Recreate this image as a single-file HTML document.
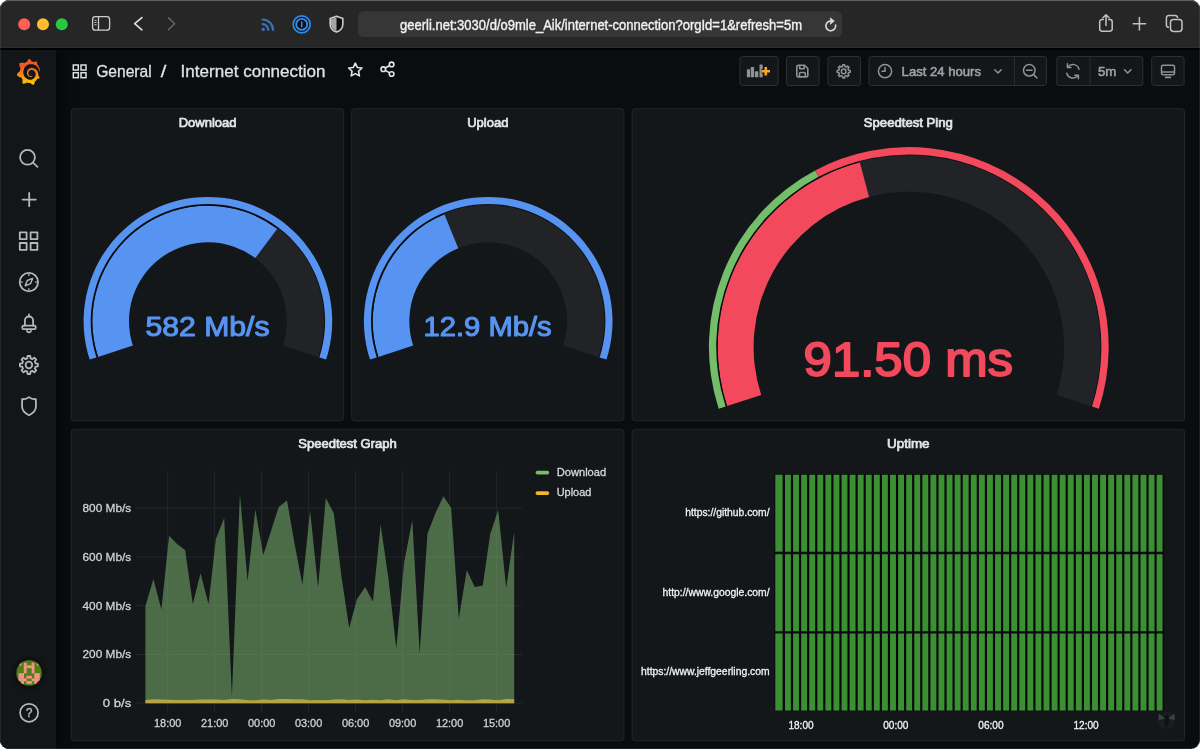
<!DOCTYPE html>
<html lang="en"><head><meta charset="utf-8"><title>Internet connection - Grafana</title>
<style>
html,body{margin:0;padding:0;background:#fff;}
body{width:1200px;height:749px;overflow:hidden;position:relative;font-family:"Liberation Sans",Arial,sans-serif;}
.win{position:absolute;left:0;top:0;width:1200px;height:749px;border-radius:9px;overflow:hidden;background:#0b0c0e;}
.titlebar{position:absolute;left:0;top:0;width:1200px;height:48px;background:#262626;box-shadow:inset 0 -1px 0 #2d2d2f;border-bottom:2px solid #000;z-index:2;}
.sidebar{position:absolute;left:0;top:50px;width:56px;height:699px;background:#131618;box-shadow:0 0 20px #000;}
.navbar{position:absolute;left:56px;top:49px;width:1144px;height:47px;}
svg.ov{z-index:3;position:absolute;left:0;top:0;width:1200px;height:749px;}
svg text{font-family:"Liberation Sans",Arial,sans-serif;}
svg.ov{will-change:transform;}
.edge{z-index:4;position:absolute;left:0;top:0;width:1200px;height:749px;border-radius:9px;box-sizing:border-box;box-shadow:inset 0 1px 0 rgba(255,255,255,.2), inset 0 0 0 1px rgba(255,255,255,.08);pointer-events:none;}
</style></head>
<body>
<div class="win">
  <div class="titlebar"></div>
  <div class="sidebar"></div>
  <div class="navbar"></div>
  <svg class="ov" viewBox="0 0 1200 749">
<rect x="71.3" y="108.7" width="272.4" height="312.1" rx="3" fill="#131719" stroke="#23262b"/>
<rect x="351.7" y="108.7" width="272.2" height="312.1" rx="3" fill="#131719" stroke="#23262b"/>
<rect x="632.2" y="108.7" width="552.3" height="312.1" rx="3" fill="#131719" stroke="#23262b"/>
<rect x="71.3" y="429.3" width="552.6" height="311.4" rx="3" fill="#131719" stroke="#23262b"/>
<rect x="632.2" y="429.3" width="552.3" height="311.4" rx="3" fill="#131719" stroke="#23262b"/>
<rect x="739.9" y="56.5" width="38.2" height="29" rx="2.5" fill="#131719" stroke="#2b2f34"/>
<rect x="786.5" y="56.5" width="32.6" height="29" rx="2.5" fill="#131719" stroke="#2b2f34"/>
<rect x="827.9" y="56.5" width="32.6" height="29" rx="2.5" fill="#131719" stroke="#2b2f34"/>
<rect x="869" y="56.5" width="177.5" height="29" rx="2.5" fill="#131719" stroke="#2b2f34"/>
<rect x="1056.8" y="56.5" width="86" height="29" rx="2.5" fill="#131719" stroke="#2b2f34"/>
<rect x="1151.7" y="56.5" width="32.4" height="29" rx="2.5" fill="#131719" stroke="#2b2f34"/>
<path d="M1014.4 56.5V85.5M1090 56.5V85.5" stroke="#2b2f34"/>
<!-- Safari toolbar -->
<circle cx="24.2" cy="24.2" r="6" fill="#fe5f57"/><circle cx="43" cy="24.2" r="6" fill="#febc2e"/><circle cx="61.8" cy="24.2" r="6" fill="#28c840"/>
<g fill="none" stroke="#cdcdcd" stroke-width="1.3"><rect x="92.6" y="16.6" width="17" height="13.6" rx="2.8"/><path d="M98.5 16.6V30.2"/><path d="M94.4 20.3h2.2M94.4 22.5h2.2M94.4 24.7h2.2" stroke-width=".9"/></g>
<path d="M141.9 17.6L134.7 23.7L141.9 29.8" fill="none" stroke="#dcdcdc" stroke-width="1.7" stroke-linecap="round" stroke-linejoin="round"/>
<path d="M168.5 17.9L174.6 23.8L168.5 29.7" fill="none" stroke="#66666a" stroke-width="1.5" stroke-linecap="round" stroke-linejoin="round"/>
<g fill="none" stroke="#3d6fb4" stroke-width="2.2" stroke-linecap="round"><path d="M262.5 19.5A10.5 10.5 0 0 1 273 30"/><path d="M262.5 24.2A5.8 5.8 0 0 1 268.3 30"/></g><circle cx="263.2" cy="29.4" r="1.7" fill="#3d6fb4"/>
<circle cx="301.7" cy="24.4" r="8.5" fill="#141416" stroke="#2f8bea" stroke-width="1.7"/><circle cx="301.7" cy="24.4" r="5.5" fill="#101012" stroke="#2f8bea" stroke-width="1.9"/><rect x="300.9" y="21.2" width="1.6" height="6.4" rx=".8" fill="#2f8bea"/>
<path d="M336.5 16.3l6.3 2.3v5.6c0 3.8-2.6 6.5-6.3 7.9c-3.7-1.4-6.3-4.1-6.3-7.9v-5.6z" fill="#0e0e0f" stroke="#cdcdcd" stroke-width="1.6" stroke-linejoin="round"/><path d="M336.5 17.2v14c-3.3-1.3-5.5-3.7-5.5-7v-5z" fill="#a2a5a8"/>
<rect x="358" y="11.2" width="484.1" height="25.9" rx="5.5" fill="#363636"/>
<text x="400" y="29.6" font-size="13.8" fill="#f0f0f0" stroke="#f0f0f0" stroke-width="0.4" textLength="402" lengthAdjust="spacingAndGlyphs">geerli.net:3030/d/o9mle_Aik/internet-connection?orgId=1&amp;refresh=5m</text>
<path d="M835.6 25.1A4.9 4.9 0 1 1 830.4 21" fill="none" stroke="#dcdcdc" stroke-width="1.6" stroke-linecap="round"/><path d="M830.3 17.7l4.1 3.4l-4.1 3.3z" fill="#dcdcdc" stroke="#dcdcdc" stroke-width=".5" stroke-linejoin="round"/>
<g fill="none" stroke="#c3c3c6" stroke-width="1.5" stroke-linecap="round" stroke-linejoin="round"><path d="M1103.3 19.5h-1.3a2.3 2.3 0 0 0-2.3 2.3v7.1a2.3 2.3 0 0 0 2.3 2.3h7.9a2.3 2.3 0 0 0 2.3-2.3v-7.1a2.3 2.3 0 0 0-2.3-2.3h-1.3"/><path d="M1106 25.5V15M1102.9 17.7l3.1-3l3.1 3"/></g>
<path d="M1133.2 23.7h12.4M1139.4 17.5v12.4" stroke="#c3c3c6" stroke-width="1.5" stroke-linecap="round"/>
<g fill="none" stroke="#c3c3c6" stroke-width="1.5"><rect x="1170.5" y="19.5" width="11.5" height="11.9" rx="2.8"/><path d="M1168.9 27.3h-.1a2.4 2.4 0 0 1-2.4-2.4v-7.1a2.4 2.4 0 0 1 2.4-2.4h6.4a2.4 2.4 0 0 1 2.4 2.4v.1"/></g>
<!-- Grafana side menu -->
<defs><linearGradient id="lg" gradientUnits="userSpaceOnUse" x1="175.5" y1="445" x2="175.5" y2="113"><stop offset="0" stop-color="#FFF100"/><stop offset="1" stop-color="#F05A28"/></linearGradient></defs>
<g transform="translate(16.2 58.6) scale(0.0693 0.0722)"><path fill="url(#lg)" d="M342,161.2c-0.6-6.1-1.6-13.1-3.6-20.9c-2-7.7-5-16.2-9.4-25c-4.4-8.8-10.1-17.9-17.5-26.8c-2.9-3.5-6.1-6.9-9.5-10.2c5.1-20.3-6.2-37.9-6.2-37.9c-19.5-1.2-31.9,6.1-36.5,9.4c-0.8-0.3-1.5-0.7-2.3-1c-3.3-1.3-6.7-2.6-10.3-3.7c-3.5-1.1-7.1-2.1-10.8-3c-3.7-0.9-7.4-1.6-11.2-2.2c-0.7-0.1-1.3-0.2-2-0.3c-8.5-27.2-32.9-38.6-32.9-38.6c-27.3,17.3-32.4,41.5-32.4,41.5s-0.1,0.5-0.3,1.4c-1.5,0.4-3,0.9-4.5,1.3c-2.1,0.6-4.2,1.4-6.2,2.2c-2.1,0.8-4.1,1.6-6.2,2.5c-4.1,1.8-8.2,3.8-12.2,6c-3.9,2.2-7.7,4.6-11.4,7.1c-0.5-0.2-1-0.4-1-0.4c-37.8-14.4-71.3,2.9-71.3,2.9c-3.1,40.2,15.1,65.5,18.7,70.1c-0.9,2.5-1.7,5-2.5,7.5c-2.8,9.1-4.9,18.4-6.2,28.1c-0.2,1.4-0.4,2.8-0.5,4.2C18.8,192.7,8.5,228,8.5,228c29.1,33.5,63.1,35.6,63.1,35.6c0,0,0.1-0.1,0.1-0.1c4.3,7.7,9.3,15,14.9,21.9c2.4,2.9,4.8,5.6,7.4,8.3c-10.6,30.4,1.5,55.6,1.5,55.6c32.4,1.2,53.7-14.2,58.2-17.7c3.2,1.1,6.5,2.1,9.8,2.9c10,2.6,20.2,4.1,30.4,4.5c2.5,0.1,5.1,0.2,7.6,0.1l1.2,0l0.8,0l1.6,0l1.6-0.1l0,0.1c15.3,21.8,42.1,24.9,42.1,24.9c19.1-20.1,20.2-40.1,20.2-44.4l0,0c0,0,0-0.1,0-0.3c0-0.4,0-0.6,0-0.6l0,0c0-0.3,0-0.6,0-0.9c4-2.8,7.8-5.8,11.4-9.1c7.6-6.9,14.3-14.8,19.9-23.3c0.5-0.8,1-1.6,1.5-2.4c21.6,1.2,36.9-13.4,36.9-13.4c-3.6-22.5-16.4-33.5-19.1-35.6l0,0c0,0-0.1-0.1-0.3-0.2c-0.2-0.1-0.2-0.2-0.2-0.2c0,0,0,0,0,0c-0.1-0.1-0.3-0.2-0.5-0.3c0.1-1.4,0.2-2.7,0.3-4.1c0.2-2.4,0.2-4.9,0.2-7.3l0-1.8l0-0.9l0-0.5c0-0.6,0-0.4,0-0.6l-0.1-1.5l-0.1-2c0-0.7-0.1-1.3-0.2-1.9c-0.1-0.6-0.1-1.3-0.2-1.9l-0.2-1.9l-0.3-1.9c-0.4-2.5-0.8-4.9-1.4-7.4c-2.3-9.7-6.1-18.9-11-27.2c-5-8.3-11.2-15.6-18.3-21.8c-7-6.2-14.9-11.2-23.1-14.9c-8.3-3.7-16.9-6.1-25.5-7.2c-4.3-0.6-8.6-0.8-12.9-0.7l-1.6,0l-0.4,0c-0.1,0-0.6,0-0.5,0l-0.7,0l-1.6,0.1c-0.6,0-1.2,0.1-1.7,0.1c-2.2,0.2-4.4,0.5-6.5,0.9c-8.6,1.6-16.7,4.7-23.8,9c-7.1,4.3-13.3,9.6-18.3,15.6c-5,6-8.9,12.7-11.6,19.6c-2.7,6.9-4.2,14.1-4.6,21c-0.1,1.7-0.1,3.5-0.1,5.2c0,0.4,0,0.9,0,1.3l0.1,1.4c0.1,0.8,0.1,1.7,0.2,2.5c0.3,3.5,1,6.9,1.9,10.1c1.9,6.5,4.9,12.4,8.6,17.4c3.7,5,8.2,9.1,12.9,12.4c4.7,3.2,9.8,5.5,14.8,7c5,1.5,10,2.1,14.7,2.1c0.6,0,1.2,0,1.7,0c0.3,0,0.6,0,0.9,0c0.3,0,0.6,0,0.9-0.1c0.5,0,1-0.1,1.5-0.1c0.1,0,0.3,0,0.4-0.1l0.5-0.1c0.3,0,0.6-0.1,0.9-0.1c0.6-0.1,1.1-0.2,1.7-0.3c0.6-0.1,1.1-0.2,1.6-0.4c1.1-0.2,2.1-0.6,3.1-0.9c2-0.7,4-1.5,5.7-2.4c1.8-0.9,3.4-2,5-3c0.4-0.3,0.9-0.6,1.3-1c1.6-1.3,1.9-3.7,0.6-5.3c-1.1-1.4-3.1-1.8-4.7-0.9c-0.4,0.2-0.8,0.4-1.2,0.6c-1.4,0.7-2.8,1.3-4.3,1.8c-1.5,0.5-3.1,0.9-4.7,1.2c-0.8,0.1-1.6,0.2-2.5,0.3c-0.4,0-0.8,0.1-1.3,0.1c-0.4,0-0.9,0-1.2,0c-0.4,0-0.8,0-1.2,0c-0.5,0-1,0-1.5-0.1c0,0-0.3,0-0.1,0l-0.2,0l-0.3,0c-0.2,0-0.5,0-0.7-0.1c-0.5-0.1-0.9-0.1-1.4-0.2c-3.7-0.5-7.4-1.6-10.9-3.2c-3.6-1.6-7-3.8-10.1-6.6c-3.1-2.8-5.8-6.1-7.9-9.9c-2.1-3.8-3.6-8-4.3-12.4c-0.3-2.2-0.5-4.5-0.4-6.7c0-0.6,0.1-1.2,0.1-1.8c0,0.2,0-0.1,0-0.1l0-0.2l0-0.5c0-0.3,0.1-0.6,0.1-0.9c0.1-1.2,0.3-2.4,0.5-3.6c1.7-9.6,6.5-19,13.9-26.1c1.9-1.8,3.9-3.4,6-4.9c2.1-1.5,4.4-2.8,6.8-3.9c2.4-1.1,4.8-2,7.4-2.7c2.5-0.7,5.1-1.1,7.8-1.4c1.3-0.1,2.6-0.2,4-0.2c0.4,0,0.6,0,0.9,0l1.1,0l0.7,0c0.3,0,0,0,0.1,0l0.3,0l1.1,0.1c2.9,0.2,5.7,0.6,8.5,1.3c5.6,1.2,11.1,3.3,16.2,6.1c10.2,5.7,18.9,14.5,24.2,25.1c2.7,5.3,4.6,11,5.5,16.9c0.2,1.5,0.4,3,0.5,4.5l0.1,1.1l0.1,1.1c0,0.4,0,0.8,0,1.1c0,0.4,0,0.8,0,1.1l0,1l0,1.1c0,0.7-0.1,1.9-0.1,2.6c-0.1,1.6-0.3,3.3-0.5,4.9c-0.2,1.6-0.5,3.2-0.8,4.8c-0.3,1.6-0.7,3.2-1.1,4.7c-0.8,3.1-1.8,6.2-3,9.3c-2.4,6-5.6,11.8-9.4,17.1c-7.7,10.6-18.2,19.2-30.2,24.7c-6,2.7-12.3,4.7-18.8,5.7c-3.2,0.6-6.5,0.9-9.8,1l-0.6,0l-0.5,0l-1.1,0l-1.6,0l-0.8,0c0.4,0-0.1,0-0.1,0l-0.3,0c-1.8,0-3.5-0.1-5.3-0.3c-7-0.5-13.9-1.8-20.7-3.7c-6.7-1.9-13.2-4.6-19.4-7.8c-12.3-6.6-23.4-15.6-32-26.5c-4.3-5.4-8.1-11.3-11.2-17.4c-3.1-6.1-5.6-12.6-7.4-19.1c-1.8-6.6-2.9-13.3-3.4-20.1l-0.1-1.3l0-0.3l0-0.3l0-0.6l0-1.1l0-0.3l0-0.4l0-0.8l0-1.6l0-0.3c0,0,0,0.1,0-0.1l0-0.6c0-0.8,0-1.7,0-2.5c0.1-3.3,0.4-6.8,0.8-10.2c0.4-3.4,1-6.9,1.7-10.3c0.7-3.4,1.5-6.8,2.5-10.2c1.9-6.7,4.3-13.2,7.1-19.3c5.7-12.2,13.1-23.1,22-31.8c2.2-2.2,4.5-4.2,6.9-6.2c2.4-1.9,4.9-3.7,7.5-5.4c2.5-1.7,5.2-3.2,7.9-4.6c1.3-0.7,2.7-1.4,4.1-2c0.7-0.3,1.4-0.6,2.1-0.9c0.7-0.3,1.4-0.6,2.1-0.9c2.8-1.2,5.7-2.2,8.7-3.1c0.7-0.2,1.5-0.4,2.2-0.7c0.7-0.2,1.5-0.4,2.2-0.6c1.5-0.4,3-0.8,4.5-1.1c0.7-0.2,1.5-0.3,2.3-0.5c0.8-0.2,1.5-0.3,2.3-0.5c0.8-0.1,1.5-0.3,2.3-0.4l1.1-0.2l1.2-0.2c0.8-0.1,1.5-0.2,2.3-0.3c0.9-0.1,1.7-0.2,2.6-0.3c0.7-0.1,1.9-0.2,2.6-0.3c0.5-0.1,1.1-0.1,1.6-0.2l1.1-0.1l0.5-0.1l0.6,0c0.9-0.1,1.7-0.1,2.6-0.2l1.3-0.1c0,0,0.5,0,0.1,0l0.3,0l0.6,0c0.7,0,1.5-0.1,2.2-0.1c2.9-0.1,5.9-0.1,8.8,0c5.8,0.2,11.5,0.9,17,1.9c11.1,2.1,21.5,5.6,31,10.3c9.5,4.6,17.9,10.3,25.3,16.5c0.5,0.4,0.9,0.8,1.4,1.2c0.4,0.4,0.9,0.8,1.3,1.2c0.9,0.8,1.7,1.6,2.6,2.4c0.9,0.8,1.7,1.6,2.5,2.4c0.8,0.8,1.6,1.6,2.4,2.5c3.1,3.3,6,6.6,8.6,10c5.2,6.7,9.4,13.5,12.7,19.9c0.2,0.4,0.4,0.8,0.6,1.2c0.2,0.4,0.4,0.8,0.6,1.2c0.4,0.8,0.8,1.6,1.1,2.4c0.4,0.8,0.7,1.5,1.1,2.3c0.3,0.8,0.7,1.5,1,2.3c1.2,3,2.4,5.9,3.3,8.6c1.5,4.4,2.6,8.3,3.5,11.7c0.3,1.4,1.6,2.3,3,2.1c1.5-0.1,2.6-1.3,2.6-2.8C342.6,170.4,342.5,166.1,342,161.2z"/></g>
<g fill="none" stroke="#b4b7bc" stroke-width="1.8" stroke-linecap="round" stroke-linejoin="round"><circle cx="27.5" cy="157.3" r="7.4"/><path d="M33 162.7L37.5 166.8"/></g>
<g fill="none" stroke="#b4b7bc" stroke-width="1.8" stroke-linecap="round" stroke-linejoin="round"><path d="M22.6 199.6h13.2M29.2 193v13.2"/></g>
<g fill="none" stroke="#b4b7bc" stroke-width="1.8" stroke-linecap="round" stroke-linejoin="round" stroke-linejoin="miter"><rect x="19.8" y="232.3" width="6.8" height="6.8"/><rect x="30.6" y="232.3" width="6.8" height="6.8"/><rect x="19.8" y="243" width="6.8" height="6.8"/><rect x="30.6" y="243" width="6.8" height="6.8"/></g>
<g fill="none" stroke="#b4b7bc" stroke-width="1.8" stroke-linecap="round" stroke-linejoin="round"><circle cx="28.9" cy="282.1" r="9.2"/><path d="M32.6 278.4l-2.1 5.3l-5.3 2.1l2.1-5.3z" stroke-width="1.4"/><path d="M28.9 274.3v1.2M28.9 288.7v1.2M21.1 282.1h1.2M35.5 282.1h1.2" stroke-width="1.3"/></g>
<g fill="none" stroke="#b4b7bc" stroke-width="1.8" stroke-linecap="round" stroke-linejoin="round"><path d="M24.9 325.6v-5a4.1 4.1 0 0 1 8.2 0v5"/><rect x="22.3" y="325.7" width="13.4" height="3.5" rx="1.2"/><path d="M29 316.3v-1.8"/><path d="M27 330.9a2.1 2.1 0 0 0 4 0"/></g>
<g fill="none" stroke="#b4b7bc" stroke-width="1.8" stroke-linecap="round" stroke-linejoin="round"><path d="M35.6 363.34L37.9 363.65L37.9 366.35L35.6 366.66L34.81 368.56L36.22 370.41L34.31 372.32L32.46 370.91L30.56 371.7L30.25 374L27.55 374L27.24 371.7L25.34 370.91L23.49 372.32L21.58 370.41L22.99 368.56L22.2 366.66L19.9 366.35L19.9 363.65L22.2 363.34L22.99 361.44L21.58 359.59L23.49 357.68L25.34 359.09L27.24 358.3L27.55 356L30.25 356L30.56 358.3L32.46 359.09L34.31 357.68L36.22 359.59L34.81 361.44Z"/><circle cx="28.9" cy="365" r="3.3"/></g>
<g fill="none" stroke="#b4b7bc" stroke-width="1.8" stroke-linecap="round" stroke-linejoin="round"><path d="M29 397.1C27 398.7 24.6 399.4 22.1 399.2V406.8C22.1 410.9 25.4 413.5 29 415.3C32.6 413.5 35.9 410.9 35.9 406.8V399.2C33.4 399.4 31 398.7 29 397.1Z"/></g>
<defs><clipPath id="av"><circle cx="29.05" cy="672.9" r="12.7"/></clipPath><radialGradient id="avs"><stop offset="0.55" stop-color="#000" stop-opacity=".4"/><stop offset="1" stop-color="#000" stop-opacity="0"/></radialGradient></defs>
<circle cx="29.05" cy="673.3" r="19" fill="url(#avs)"/>
<circle cx="29.05" cy="672.9" r="13.3" fill="#15181b"/>
<g clip-path="url(#av)"><rect x="15" y="659" width="28" height="28" fill="#4f7d16"/><rect x="18.57" y="662.72" width="2.82" height="2.82" fill="#f8938a"/><rect x="23.81" y="662.72" width="2.82" height="2.82" fill="#f8938a"/><rect x="31.67" y="662.72" width="2.82" height="2.82" fill="#f8938a"/><rect x="36.91" y="662.72" width="2.82" height="2.82" fill="#f8938a"/><rect x="23.81" y="665.34" width="2.82" height="2.82" fill="#f8938a"/><rect x="26.43" y="665.34" width="2.82" height="2.82" fill="#f8938a"/><rect x="29.05" y="665.34" width="2.82" height="2.82" fill="#f8938a"/><rect x="31.67" y="665.34" width="2.82" height="2.82" fill="#f8938a"/><rect x="23.81" y="667.96" width="2.82" height="2.82" fill="#f8938a"/><rect x="31.67" y="667.96" width="2.82" height="2.82" fill="#f8938a"/><rect x="23.81" y="670.58" width="2.82" height="2.82" fill="#f8938a"/><rect x="31.67" y="670.58" width="2.82" height="2.82" fill="#f8938a"/><rect x="18.57" y="673.2" width="2.82" height="2.82" fill="#f8938a"/><rect x="21.19" y="673.2" width="2.82" height="2.82" fill="#f8938a"/><rect x="34.29" y="673.2" width="2.82" height="2.82" fill="#f8938a"/><rect x="36.91" y="673.2" width="2.82" height="2.82" fill="#f8938a"/><rect x="18.57" y="675.82" width="2.82" height="2.82" fill="#f8938a"/><rect x="21.19" y="675.82" width="2.82" height="2.82" fill="#f8938a"/><rect x="26.43" y="675.82" width="2.82" height="2.82" fill="#f8938a"/><rect x="29.05" y="675.82" width="2.82" height="2.82" fill="#f8938a"/><rect x="34.29" y="675.82" width="2.82" height="2.82" fill="#f8938a"/><rect x="36.91" y="675.82" width="2.82" height="2.82" fill="#f8938a"/><rect x="18.57" y="678.44" width="2.82" height="2.82" fill="#f8938a"/><rect x="21.19" y="678.44" width="2.82" height="2.82" fill="#f8938a"/><rect x="23.81" y="678.44" width="2.82" height="2.82" fill="#f8938a"/><rect x="31.67" y="678.44" width="2.82" height="2.82" fill="#f8938a"/><rect x="34.29" y="678.44" width="2.82" height="2.82" fill="#f8938a"/><rect x="36.91" y="678.44" width="2.82" height="2.82" fill="#f8938a"/><rect x="21.19" y="681.06" width="2.82" height="2.82" fill="#f8938a"/><rect x="26.43" y="681.06" width="2.82" height="2.82" fill="#f8938a"/><rect x="29.05" y="681.06" width="2.82" height="2.82" fill="#f8938a"/><rect x="34.29" y="681.06" width="2.82" height="2.82" fill="#f8938a"/></g>
<circle cx="29.1" cy="712.8" r="9" fill="none" stroke="#b4b7bc" stroke-width="1.7"/>
<text x="29.1" y="717.1" font-size="12" fill="#b4b7bc" stroke="#b4b7bc" stroke-width="0.4" text-anchor="middle">?</text>
<!-- Dashboard navbar -->
<g fill="none" stroke="#dcdfe3" stroke-width="1.5"><rect x="73.3" y="65" width="5" height="5"/><rect x="81" y="65" width="5" height="5"/><rect x="73.3" y="72.7" width="5" height="5"/><rect x="81" y="72.7" width="5" height="5"/></g>
<text x="96.2" y="76.7" font-size="17" fill="#e0e2e6" stroke="#e0e2e6" stroke-width="0.3" textLength="55.5" lengthAdjust="spacingAndGlyphs">General</text>
<text x="160.8" y="76.7" font-size="17" fill="#e0e2e6" stroke="#e0e2e6" stroke-width="0.3" textLength="5.6" lengthAdjust="spacingAndGlyphs">/</text>
<text x="180.6" y="76.7" font-size="17" fill="#e0e2e6" stroke="#e0e2e6" stroke-width="0.3" textLength="145" lengthAdjust="spacingAndGlyphs">Internet connection</text>
<path d="M355.3 63.2L357.3 67.45L361.96 68.04L358.53 71.25L359.41 75.86L355.3 73.6L351.19 75.86L352.07 71.25L348.64 68.04L353.3 67.45Z" fill="none" stroke="#e2e4e8" stroke-width="1.6" stroke-linejoin="round"/>
<g transform="translate(0 -.4)" fill="none" stroke="#e2e4e8" stroke-width="1.6"><circle cx="391.6" cy="64.8" r="2.3"/><circle cx="383.3" cy="69.6" r="2.3"/><circle cx="391.6" cy="74.4" r="2.3"/><path d="M385.3 68.4l4.3-2.5M385.3 70.8l4.3 2.5"/></g>
<g fill="#8f9398"><rect x="746.9" y="69.2" width="3.1" height="8.1" rx=".6"/><rect x="750.7" y="67" width="3.4" height="10.3" rx=".6"/><rect x="754.9" y="71.3" width="3.4" height="6" rx=".6"/><rect x="759.5" y="64.5" width="3.2" height="12.8" rx=".6"/></g><path d="M761.6 71.3h8.4M765.8 67.1v8.4" stroke="#141619" stroke-width="4.6" fill="none"/><path d="M761.6 71.3h8.4M765.8 67.1v8.4" stroke="#f7a723" stroke-width="2.6" fill="none"/>
<g fill="none" stroke="#8f9398" stroke-width="1.6" stroke-linejoin="round"><path d="M798.3 65.3h6.3l3.2 3.2v6.9a1.5 1.5 0 0 1-1.5 1.5h-8a1.5 1.5 0 0 1-1.5-1.5v-8.6a1.5 1.5 0 0 1 1.5-1.5z"/><path d="M799.7 65.5v3.3h4.4v-3.3M799.5 76.7v-3.2a1 1 0 0 1 1-1h3.8a1 1 0 0 1 1 1v3.2"/></g>
<g fill="none" stroke="#8f9398" stroke-width="1.5" stroke-linejoin="round"><path d="M848.55 70.19L850.23 70.42L850.23 72.38L848.55 72.61L847.98 73.98L849.01 75.32L847.62 76.71L846.28 75.68L844.91 76.25L844.68 77.93L842.72 77.93L842.49 76.25L841.12 75.68L839.78 76.71L838.39 75.32L839.42 73.98L838.85 72.61L837.17 72.38L837.17 70.42L838.85 70.19L839.42 68.82L838.39 67.48L839.78 66.09L841.12 67.12L842.49 66.55L842.72 64.87L844.68 64.87L844.91 66.55L846.28 67.12L847.62 66.09L849.01 67.48L847.98 68.82Z"/><circle cx="843.7" cy="71.4" r="2.3"/></g>
<g fill="none" stroke="#8f9398" stroke-width="1.5" stroke-linecap="round"><circle cx="885" cy="71.2" r="6.6"/><path d="M885 67.4v3.8h-3"/></g>
<text x="901.6" y="75.8" font-size="13.7" fill="#9fa3a9" stroke="#9fa3a9" stroke-width="0.55" textLength="79.4" lengthAdjust="spacingAndGlyphs">Last 24 hours</text>
<path d="M994.8 69.8l3.2 3.2l3.2-3.2" fill="none" stroke="#8f9398" stroke-width="1.5" stroke-linecap="round" stroke-linejoin="round"/>
<g fill="none" stroke="#8f9398" stroke-width="1.5" stroke-linecap="round"><circle cx="1029.3" cy="70.3" r="5.8"/><path d="M1033.6 74.6l3.4 3.4M1026.6 70.3h5.4"/></g>
<g transform="translate(2146 0) scale(-1 1)" fill="none" stroke="#8f9398" stroke-width="1.5" stroke-linecap="round" stroke-linejoin="round"><path d="M1067 69.3a6.3 6.3 0 0 1 11.2-2.2M1079.2 73.3a6.3 6.3 0 0 1-11.2 2.2"/><path d="M1078.6 63.8v3.6h-3.6M1067.6 78.8v-3.6h3.6"/></g>
<text x="1098" y="75.8" font-size="13.7" fill="#9fa3a9" stroke="#9fa3a9" stroke-width="0.55" textLength="18.4" lengthAdjust="spacingAndGlyphs">5m</text>
<path d="M1124.5 69.8l3.2 3.2l3.2-3.2" fill="none" stroke="#8f9398" stroke-width="1.5" stroke-linecap="round" stroke-linejoin="round"/>
<g fill="none" stroke="#8f9398" stroke-width="1.5" stroke-linejoin="round"><rect x="1161.5" y="65.2" width="13" height="9.6" rx="1.6"/><path d="M1161.5 72h13"/><path d="M1165.6 77.3h4.8" stroke-width="1.8" stroke-linecap="round"/></g>
<!-- Panels -->
<text x="178.75" y="126.9" font-size="12.5" fill="#e3e6eb" stroke="#e3e6eb" stroke-width="0.7" textLength="57.7" lengthAdjust="spacingAndGlyphs">Download</text>
<text x="467.2" y="126.9" font-size="12.5" fill="#e3e6eb" stroke="#e3e6eb" stroke-width="0.7" textLength="41.2" lengthAdjust="spacingAndGlyphs">Upload</text>
<text x="863.8" y="126.9" font-size="12.5" fill="#e3e6eb" stroke="#e3e6eb" stroke-width="0.7" textLength="89" lengthAdjust="spacingAndGlyphs">Speedtest Ping</text>
<text x="298.25" y="447.7" font-size="12.5" fill="#e3e6eb" stroke="#e3e6eb" stroke-width="0.7" textLength="98.5" lengthAdjust="spacingAndGlyphs">Speedtest Graph</text>
<text x="887.05" y="447.7" font-size="12.5" fill="#e3e6eb" stroke="#e3e6eb" stroke-width="0.7" textLength="42.5" lengthAdjust="spacingAndGlyphs">Uptime</text>
<path fill="#212327" d="M96.44 357.42A117.2 117.2 0 1 1 319.36 357.42L282.94 345.58A78.9 78.9 0 1 0 132.86 345.58Z"/>
<path fill="#5794f2" d="M98.05 356.89A115.5 115.5 0 0 1 277.25 228.84L255.27 258.1A78.9 78.9 0 0 0 132.86 345.58Z"/>
<path fill="none" stroke="#0a0b0c" stroke-width="1.7" d="M97.24 357.15A116.35000000000001 116.35000000000001 0 0 1 277.76 228.16"/>
<path fill="none" stroke="#0e0f11" stroke-width="0.9" d="M278.03 227.8A116.8 116.8 0 0 1 318.98 357.29"/>
<path fill="#5794f2" d="M89.68 359.61A124.3 124.3 0 1 1 326.12 359.61L319.36 357.42A117.2 117.2 0 1 0 96.44 357.42Z"/>
<path fill="#212327" d="M376.74 357.42A117.2 117.2 0 1 1 599.66 357.42L563.24 345.58A78.9 78.9 0 1 0 413.16 345.58Z"/>
<path fill="#5794f2" d="M378.35 356.89A115.5 115.5 0 0 1 444.37 214.34L458.26 248.2A78.9 78.9 0 0 0 413.16 345.58Z"/>
<path fill="none" stroke="#0a0b0c" stroke-width="1.7" d="M377.54 357.15A116.35000000000001 116.35000000000001 0 0 1 444.05 213.55"/>
<path fill="none" stroke="#0e0f11" stroke-width="0.9" d="M443.88 213.14A116.8 116.8 0 0 1 599.28 357.29"/>
<path fill="#5794f2" d="M369.98 359.61A124.3 124.3 0 1 1 606.42 359.61L599.66 357.42A117.2 117.2 0 1 0 376.74 357.42Z"/>
<path fill="#212327" d="M725.63 406.52A192.6 192.6 0 1 1 1091.97 406.52L1056.4 394.96A155.2 155.2 0 1 0 761.2 394.96Z"/>
<path fill="#f2495c" d="M727.05 406.05A191.1 191.1 0 0 1 859.82 162.28L869.02 196.98A155.2 155.2 0 0 0 761.2 394.96Z"/>
<path fill="none" stroke="#0a0b0c" stroke-width="1.5" d="M726.34 406.28A191.85 191.85 0 0 1 859.63 161.56"/>
<path fill="none" stroke="#0e0f11" stroke-width="0.9" d="M859.54 161.22A192.2 192.2 0 0 1 1091.59 406.39"/>
<path fill="#73bf69" d="M718.68 408.77A199.9 199.9 0 0 1 815.11 170.42L818.53 176.87A192.6 192.6 0 0 0 725.63 406.52Z"/>
<path fill="#f2495c" d="M815.11 170.42A199.9 199.9 0 0 1 1098.92 408.77L1091.97 406.52A192.6 192.6 0 0 0 818.53 176.87Z"/>
<text x="145.45" y="335.7" font-size="26.8" fill="#5794f2" stroke="#5794f2" stroke-width="1.05" textLength="124.1" lengthAdjust="spacingAndGlyphs" stroke-linejoin="round">582 Mb/s</text>
<text x="423.45" y="335.7" font-size="26.8" fill="#5794f2" stroke="#5794f2" stroke-width="1.05" textLength="128.3" lengthAdjust="spacingAndGlyphs" stroke-linejoin="round">12.9 Mb/s</text>
<text x="803.6" y="375.8" font-size="47.8" fill="#f2495c" stroke="#f2495c" stroke-width="1.9" textLength="209.4" lengthAdjust="spacingAndGlyphs" stroke-linejoin="round">91.50 ms</text>
<path d="M136 508.1H522" stroke="#24272c" stroke-width="1"/>
<path d="M136 556.9H522" stroke="#24272c" stroke-width="1"/>
<path d="M136 605.7H522" stroke="#24272c" stroke-width="1"/>
<path d="M136 654.5H522" stroke="#24272c" stroke-width="1"/>
<path d="M136 703.2H522" stroke="#24272c" stroke-width="1"/>
<path d="M167.7 471V712" stroke="#24272c" stroke-width="1"/>
<path d="M214.7 471V712" stroke="#24272c" stroke-width="1"/>
<path d="M261.7 471V712" stroke="#24272c" stroke-width="1"/>
<path d="M308.6 471V712" stroke="#24272c" stroke-width="1"/>
<path d="M355.6 471V712" stroke="#24272c" stroke-width="1"/>
<path d="M402.6 471V712" stroke="#24272c" stroke-width="1"/>
<path d="M449.6 471V712" stroke="#24272c" stroke-width="1"/>
<path d="M496.6 471V712" stroke="#24272c" stroke-width="1"/>
<path d="M145.4 703.2L145.4 606.2L153.4 579L161.4 609.4L169.1 535.7L176.8 543.7L185.1 550.1L192.8 604L200.5 573.2L208.5 604L215.9 538.9L224.2 518.1L231.9 696L239.9 494L247.6 581.2L255.3 509.4L263.3 554.9L271 530.9L278.7 506.9L287 500.4L294.4 543.1L302.4 584.7L310.1 510.7L318.1 587.6L325.8 497.9L333.8 513.3L341.5 576.7L349.2 628L356.9 599.2L365.2 587L372.9 601.4L380.6 524.5L388.3 577.4L396.3 648.5L404 563L412.3 520.3L419.7 653.3L427.4 534.1L435.4 513.3L443.4 496.3L451.1 507.8L458.8 618.4L466.8 570.3L474.8 587L482.8 585.4L490.2 534.1L498.2 510.1L506.2 587.9L514.2 531.9L514.2 703.2Z" fill="#73a567" fill-opacity="0.6"/>
<path d="M145.4 703.2L145.4 699.9L153.4 699.2L161.4 699.6L169.1 699.8L176.8 700.1L185.1 700.1L192.8 699.9L200.5 699.6L208.5 699.6L215.9 699.6L224.2 700.1L231.9 698.9L239.9 699.2L247.6 700.2L255.3 700.2L263.3 699.6L271 699.9L278.7 698.9L287 698.9L294.4 699.2L302.4 699.2L310.1 700.2L318.1 699.9L325.8 700.2L333.8 699.6L341.5 699.2L349.2 699.9L356.9 699.6L365.2 700.2L372.9 699.8L380.6 700.2L388.3 699.2L396.3 700.2L404 699.2L412.3 699.9L419.7 699.9L427.4 699.2L435.4 699.2L443.4 699.8L451.1 700.2L458.8 699.8L466.8 700.2L474.8 700.2L482.8 699.2L490.2 699.6L498.2 700.2L506.2 698.9L514.2 699.2L514.2 703.2Z" fill="#bfa842" fill-opacity="0.92"/>
<text x="82.5" y="512" font-size="11.4" fill="#cfd1d5" stroke="#cfd1d5" stroke-width="0.3" textLength="48.8" lengthAdjust="spacingAndGlyphs">800 Mb/s</text>
<text x="82.5" y="560.8" font-size="11.4" fill="#cfd1d5" stroke="#cfd1d5" stroke-width="0.3" textLength="48.8" lengthAdjust="spacingAndGlyphs">600 Mb/s</text>
<text x="82.5" y="609.6" font-size="11.4" fill="#cfd1d5" stroke="#cfd1d5" stroke-width="0.3" textLength="48.8" lengthAdjust="spacingAndGlyphs">400 Mb/s</text>
<text x="82.5" y="658.4" font-size="11.4" fill="#cfd1d5" stroke="#cfd1d5" stroke-width="0.3" textLength="48.8" lengthAdjust="spacingAndGlyphs">200 Mb/s</text>
<text x="102.8" y="707.1" font-size="11.4" fill="#cfd1d5" stroke="#cfd1d5" stroke-width="0.3" textLength="28.5" lengthAdjust="spacingAndGlyphs">0 b/s</text>
<text x="154" y="727.2" font-size="11.4" fill="#cfd1d5" stroke="#cfd1d5" stroke-width="0.3" textLength="27.4" lengthAdjust="spacingAndGlyphs">18:00</text>
<text x="201" y="727.2" font-size="11.4" fill="#cfd1d5" stroke="#cfd1d5" stroke-width="0.3" textLength="27.4" lengthAdjust="spacingAndGlyphs">21:00</text>
<text x="248" y="727.2" font-size="11.4" fill="#cfd1d5" stroke="#cfd1d5" stroke-width="0.3" textLength="27.4" lengthAdjust="spacingAndGlyphs">00:00</text>
<text x="294.9" y="727.2" font-size="11.4" fill="#cfd1d5" stroke="#cfd1d5" stroke-width="0.3" textLength="27.4" lengthAdjust="spacingAndGlyphs">03:00</text>
<text x="341.9" y="727.2" font-size="11.4" fill="#cfd1d5" stroke="#cfd1d5" stroke-width="0.3" textLength="27.4" lengthAdjust="spacingAndGlyphs">06:00</text>
<text x="388.9" y="727.2" font-size="11.4" fill="#cfd1d5" stroke="#cfd1d5" stroke-width="0.3" textLength="27.4" lengthAdjust="spacingAndGlyphs">09:00</text>
<text x="435.9" y="727.2" font-size="11.4" fill="#cfd1d5" stroke="#cfd1d5" stroke-width="0.3" textLength="27.4" lengthAdjust="spacingAndGlyphs">12:00</text>
<text x="482.9" y="727.2" font-size="11.4" fill="#cfd1d5" stroke="#cfd1d5" stroke-width="0.3" textLength="27.4" lengthAdjust="spacingAndGlyphs">15:00</text>
<rect x="535.6" y="470.8" width="13.6" height="3.7" rx="1.8" fill="#73bf69"/>
<rect x="535.6" y="491.3" width="13.6" height="3.7" rx="1.8" fill="#f2b824"/>
<text x="556.7" y="475.9" font-size="11.4" fill="#d8d9da" stroke="#d8d9da" stroke-width="0.3" textLength="49.5" lengthAdjust="spacingAndGlyphs">Download</text>
<text x="556.7" y="496" font-size="11.4" fill="#d8d9da" stroke="#d8d9da" stroke-width="0.3" textLength="34.7" lengthAdjust="spacingAndGlyphs">Upload</text>
<rect x="774.4" y="473.8" width="389.8" height="236.7" fill="#0b0811"/>
<rect x="775.3" y="474.7" width="7.3" height="77" fill="#3a9131"/>
<path d="M785 513.2H1163" stroke="#3a9131" stroke-width="77" stroke-dasharray="5.9 2.18" fill="none"/>
<rect x="775.3" y="554.2" width="7.3" height="77.1" fill="#3a9131"/>
<path d="M785 592.75H1163" stroke="#3a9131" stroke-width="77.1" stroke-dasharray="5.9 2.18" fill="none"/>
<rect x="775.3" y="633.4" width="7.3" height="77.1" fill="#3a9131"/>
<path d="M785 671.95H1163" stroke="#3a9131" stroke-width="77.1" stroke-dasharray="5.9 2.18" fill="none"/>
<text x="685.2" y="516.3" font-size="10.5" fill="#f2f2f2" stroke="#f2f2f2" stroke-width="0.3" textLength="84.4" lengthAdjust="spacingAndGlyphs">https://github.com/</text>
<text x="662.6" y="595.7" font-size="10.5" fill="#f2f2f2" stroke="#f2f2f2" stroke-width="0.3" textLength="107" lengthAdjust="spacingAndGlyphs">http://www.google.com/</text>
<text x="641" y="674.8" font-size="10.5" fill="#f2f2f2" stroke="#f2f2f2" stroke-width="0.3" textLength="128.6" lengthAdjust="spacingAndGlyphs">https://www.jeffgeerling.com</text>
<text x="788.4" y="728.6" font-size="10.3" fill="#f2f2f2" stroke="#f2f2f2" stroke-width="0.3" textLength="25.2" lengthAdjust="spacingAndGlyphs">18:00</text>
<text x="883.2" y="728.6" font-size="10.3" fill="#f2f2f2" stroke="#f2f2f2" stroke-width="0.3" textLength="25.2" lengthAdjust="spacingAndGlyphs">00:00</text>
<text x="978.3" y="728.6" font-size="10.3" fill="#f2f2f2" stroke="#f2f2f2" stroke-width="0.3" textLength="25.2" lengthAdjust="spacingAndGlyphs">06:00</text>
<text x="1073.5" y="728.6" font-size="10.3" fill="#f2f2f2" stroke="#f2f2f2" stroke-width="0.3" textLength="25.2" lengthAdjust="spacingAndGlyphs">12:00</text>
<g opacity=".55"><circle cx="1166.6" cy="720.3" r="8.6" fill="#1d232c"/><path d="M1158.6 713.5l6.5 5l-6.5 1.8zM1174.6 713.5l-6.5 5l6.5 1.8z" fill="#5c626b"/><ellipse cx="1166.6" cy="721" rx="2.2" ry="6.5" fill="#0c0d10"/></g>
  </svg>
  <div class="edge"></div>
</div>
</body></html>
